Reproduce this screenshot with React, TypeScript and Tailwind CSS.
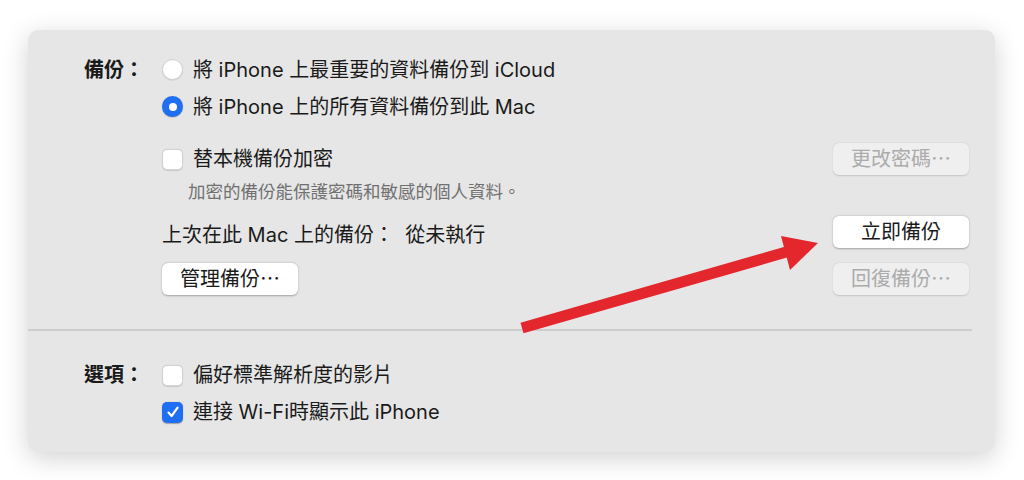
import React from 'react';

const font = { fontFamily: 'Inter, "Noto Sans CJK TC", sans-serif' };

function Radio({ checked }: { checked?: boolean }) {
  return checked ? (
    <span className="flex h-[21px] w-[21px] shrink-0 items-center justify-center rounded-full bg-[#1f6ff3] shadow-[0_0.5px_1px_rgba(0,0,0,0.3)]">
      <span className="h-[8px] w-[8px] rounded-full bg-white" />
    </span>
  ) : (
    <span className="h-[21px] w-[21px] shrink-0 rounded-full border border-[#d2d2d2] bg-white shadow-[0_0.5px_1px_rgba(0,0,0,0.12)]" />
  );
}

function Checkbox({ checked }: { checked?: boolean }) {
  return checked ? (
    <span className="flex h-[21px] w-[21px] shrink-0 items-center justify-center rounded-[5px] bg-[#1f6ff3] shadow-[0_0.5px_1px_rgba(0,0,0,0.3)]">
      <svg width="14" height="14" viewBox="0 0 14 14" fill="none">
        <path d="M2.5 7.6 L5.6 11 L11.6 2.6" stroke="white" strokeWidth="2.2" strokeLinecap="round" strokeLinejoin="round" />
      </svg>
    </span>
  ) : (
    <span className="h-[21px] w-[21px] shrink-0 rounded-[5px] border border-[#d2d2d2] bg-white shadow-[0_0.5px_1px_rgba(0,0,0,0.12)]" />
  );
}

function Button({ children, disabled }: { children: React.ReactNode; disabled?: boolean }) {
  return (
    <button
      className={
        disabled
          ? 'flex h-[32px] w-[136px] items-center justify-center rounded-[6px] bg-[#efefef] text-[20px] text-[#ababab] shadow-[0_0.5px_1.5px_rgba(0,0,0,0.15)]'
          : 'flex h-[32px] w-[136px] items-center justify-center rounded-[6px] bg-white text-[20px] text-[#1a1a1a] shadow-[0_0.5px_2px_rgba(0,0,0,0.3)]'
      }
    >
      {children}
    </button>
  );
}

export default function App() {
  return (
    <div className="relative h-[480px] w-[1024px] overflow-hidden bg-white text-[#1a1a1a]" style={font}>
      <div className="absolute left-[28px] top-[30px] h-[422px] w-[967px] rounded-[10px] bg-[#e6e6e6] shadow-[0_6px_26px_rgba(0,0,0,0.18)]">
        {/* Backup section */}
        <div className="flex pl-[56px] pr-[26px] pt-[21px]">
          <div className="flex h-[37px] w-[78px] items-center text-[20px] font-bold">備份：</div>
          <div className="flex flex-1 flex-col text-[20px]">
            <div className="flex h-[37px] items-center gap-[10px]">
              <Radio />
              <span>將 iPhone 上最重要的資料備份到 iCloud</span>
            </div>
            <div className="flex h-[37px] items-center gap-[10px]">
              <Radio checked />
              <span>將 iPhone 上的所有資料備份到此 Mac</span>
            </div>
            <div className="mt-[18px] flex h-[32px] items-center justify-between">
              <div className="flex items-center gap-[10px]">
                <Checkbox />
                <span>替本機備份加密</span>
              </div>
              <Button disabled>更改密碼⋯</Button>
            </div>
            <div className="mt-[6px] flex h-[22px] items-center pl-[26px] text-[17.5px] text-[#707070]">
              加密的備份能保護密碼和敏感的個人資料。
            </div>
            <div className="mt-[13px] flex h-[32px] items-center justify-between">
              <span className="pt-[6px]">上次在此 Mac 上的備份：&nbsp;&nbsp;從未執行</span>
              <Button>立即備份</Button>
            </div>
            <div className="mt-[15px] flex h-[32px] items-center justify-between">
              <Button>管理備份⋯</Button>
              <Button disabled>回復備份⋯</Button>
            </div>
          </div>
        </div>

        <div className="mr-[23px] mt-[34px] h-[1.5px] bg-[#cdcdcd]" />

        {/* Options section */}
        <div className="flex pl-[56px] pt-[26px]">
          <div className="flex h-[37px] w-[78px] items-center text-[20px] font-bold">選項：</div>
          <div className="flex flex-col text-[20px]">
            <div className="flex h-[37px] items-center gap-[10px]">
              <Checkbox />
              <span>偏好標準解析度的影片</span>
            </div>
            <div className="flex h-[37px] items-center gap-[10px]">
              <Checkbox checked />
              <span>連接 Wi-Fi時顯示此 iPhone</span>
            </div>
          </div>
        </div>
      </div>

      {/* Annotation arrow */}
      <svg className="pointer-events-none absolute left-0 top-0" width="1024" height="480">
        <line x1="522" y1="328" x2="788" y2="251.5" stroke="#e3272c" strokeWidth="11" />
        <polygon points="818,243 781,236 790,270" fill="#e3272c" />
      </svg>
    </div>
  );
}
